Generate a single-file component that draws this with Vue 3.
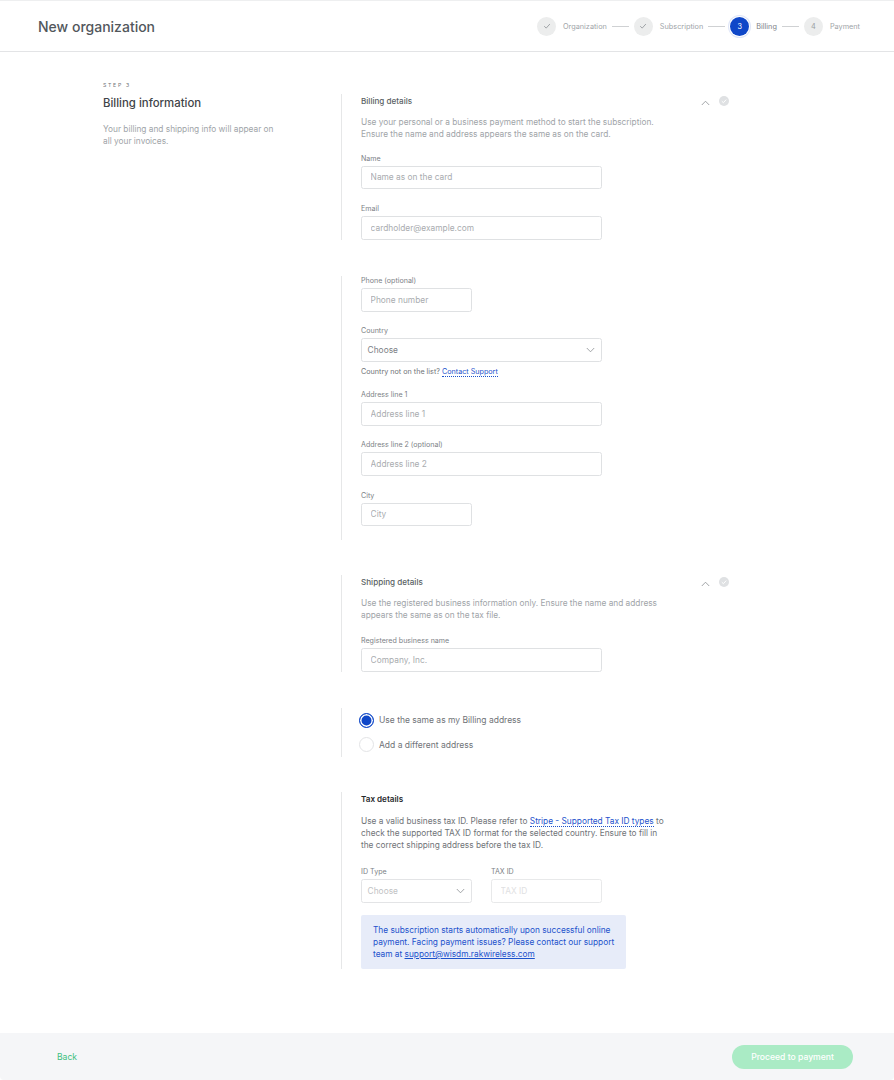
<script setup>
const steps = [
  { label: 'Organization', mark: 'check' },
  { label: 'Subscription', mark: 'check' },
  { label: 'Billing', mark: '3', active: true },
  { label: 'Payment', mark: '4' }
]
</script>

<template>
  <div class="page">
    <header class="top">
      <h1 class="page-title">New organization</h1>
      <ol class="stepper">
        <li v-for="(s, i) in steps" :key="s.label" class="step" :class="{ active: s.active }">
          <span v-if="i > 0" class="line"></span>
          <span class="dot">
            <svg v-if="s.mark === 'check'" width="8" height="8" viewBox="0 0 8 8"><path d="M1.2 4.2 3.2 6.1 6.9 2" fill="none" stroke="#8d9195" stroke-width=".8"/></svg>
            <template v-else>{{ s.mark }}</template>
          </span>
          <span class="step-label">{{ s.label }}</span>
        </li>
      </ol>
    </header>

    <main class="main">
      <aside class="intro">
        <div class="eyebrow">STEP 3</div>
        <h2 class="intro-title">Billing information</h2>
        <p class="intro-text">Your billing and shipping info will appear on all your invoices.</p>
      </aside>

      <div class="content">
        <section class="block s1">
          <div class="head">
            <h3 class="head-title">Billing details</h3>
            <div class="head-icons">
              <svg width="9" height="6" viewBox="0 0 9 6"><path d="M.8 5 4.5 1.2 8.2 5" fill="none" stroke="#8b8f93" stroke-width=".8"/></svg>
              <svg width="10" height="10" viewBox="0 0 10 10"><circle cx="5" cy="5" r="5" fill="#dfe1e3"/><path d="M2.8 5.2 4.4 6.7 7.2 3.6" fill="none" stroke="#fff" stroke-width="1"/></svg>
            </div>
          </div>
          <p class="desc">Use your personal or a business payment method to start the subscription.<br>Ensure the name and address appears the same as on the card.</p>
          <div class="fields top-gap">
            <div class="field"><label class="label">Name</label><input class="input" placeholder="Name as on the card"></div>
            <div class="field"><label class="label">Email</label><input class="input" placeholder="cardholder@example.com"></div>
          </div>
        </section>

        <section class="block s2">
          <div class="fields">
            <div class="field"><label class="label">Phone (optional)</label><input class="input short" placeholder="Phone number"></div>
            <div class="field">
              <label class="label">Country</label>
              <div class="select">
                <span>Choose</span>
                <svg width="9" height="6" viewBox="0 0 9 6"><path d="M.8 1 4.5 4.8 8.2 1" fill="none" stroke="#8b8f93" stroke-width=".8"/></svg>
              </div>
              <p class="help">Country not on the list? <a class="link">Contact Support</a></p>
            </div>
            <div class="field"><label class="label">Address line 1</label><input class="input" placeholder="Address line 1"></div>
            <div class="field"><label class="label">Address line 2 (optional)</label><input class="input" placeholder="Address line 2"></div>
            <div class="field"><label class="label">City</label><input class="input short" placeholder="City"></div>
          </div>
        </section>

        <section class="block s3">
          <div class="head">
            <h3 class="head-title">Shipping details</h3>
            <div class="head-icons">
              <svg width="9" height="6" viewBox="0 0 9 6"><path d="M.8 5 4.5 1.2 8.2 5" fill="none" stroke="#8b8f93" stroke-width=".8"/></svg>
              <svg width="10" height="10" viewBox="0 0 10 10"><circle cx="5" cy="5" r="5" fill="#dfe1e3"/><path d="M2.8 5.2 4.4 6.7 7.2 3.6" fill="none" stroke="#fff" stroke-width="1"/></svg>
            </div>
          </div>
          <p class="desc">Use the registered business information only. Ensure the name and address<br>appears the same as on the tax file.</p>
          <div class="fields top-gap-wide">
            <div class="field"><label class="label">Registered business name</label><input class="input" placeholder="Company, Inc."></div>
          </div>
        </section>

        <section class="block s4">
          <div class="radio-row"><span class="radio on"></span><span>Use the same as my Billing address</span></div>
          <div class="radio-row"><span class="radio"></span><span>Add a different address</span></div>
        </section>

        <section class="block s5">
          <h3 class="head-title dark">Tax details</h3>
          <p class="desc tax-desc">Use a valid business tax ID. Please refer to <a class="link">Stripe - Supported Tax ID types</a> to<br>check the supported TAX ID format for the selected country. Ensure to fill in<br>the correct shipping address before the tax ID.</p>
          <div class="tax-row">
            <div class="field">
              <label class="label">ID Type</label>
              <div class="select short muted">
                <span>Choose</span>
                <svg width="9" height="6" viewBox="0 0 9 6"><path d="M.8 1 4.5 4.8 8.2 1" fill="none" stroke="#8b8f93" stroke-width=".8"/></svg>
              </div>
            </div>
            <div class="field"><label class="label">TAX ID</label><input class="input short ghost" placeholder="TAX ID"></div>
          </div>
          <div class="notice">The subscription starts automatically upon successful online payment. Facing payment issues? Please contact our support team at <a class="notice-link">support@wisdm.rakwireless.com</a></div>
        </section>
      </div>
    </main>

    <footer class="bottom">
      <a class="back">Back</a>
      <button class="proceed" type="button">Proceed to payment</button>
    </footer>
  </div>
</template>

<style scoped>
.page {
  width: 894px;
  height: 1080px;
  display: flex;
  flex-direction: column;
  background: #fff;
  font-family: Inter, "Noto Sans", sans-serif;
  border-top: 1px solid #eeeff0;
  box-sizing: border-box;
  overflow: hidden;
}
.top {
  height: 50px;
  flex: none;
  display: flex;
  align-items: center;
  justify-content: space-between;
  padding: 0 34px 0 38px;
  border-bottom: 1px solid #e3e4e6;
}
.page-title {
  margin: 0;
  font-size: 14px;
  font-weight: 500;
  color: #52575c;
}
.stepper {
  list-style: none;
  margin: 0;
  padding: 0;
  display: flex;
  align-items: center;
}
.step {
  display: flex;
  align-items: center;
  font-size: 7.3px;
  color: #a0a4a8;
}
.line {
  width: 17px;
  height: 1px;
  background: #cfd1d3;
  margin: 0 5px;
}
.dot {
  width: 19px;
  height: 19px;
  border-radius: 50%;
  background: #eceded;
  color: #9a9ea2;
  display: flex;
  align-items: center;
  justify-content: center;
  margin-right: 7px;
}
.active .dot {
  background: #0f47c8;
  color: #fff;
  box-shadow: 0 0 0 1px #fff, 0 0 0 2px #dfe6f8;
}
.active .step-label {
  color: #7c8186;
}
.main {
  flex: 1;
  display: flex;
  padding: 42px 0 0 103px;
}
.intro {
  width: 238px;
  flex: none;
}
.eyebrow {
  font-size: 5.2px;
  letter-spacing: 1.7px;
  line-height: 8px;
  color: #6f7377;
  margin-top: -13px;
}
.intro-title {
  margin: 6px 0 0;
  font-size: 11.4px;
  line-height: 16px;
  font-weight: 500;
  color: #3f4448;
}
.intro-text {
  margin: 12px 0 0;
  width: 175px;
  font-size: 8.3px;
  line-height: 12px;
  color: #a0a4a8;
}
.content {
  width: 388px;
  flex: none;
}
.block {
  border-left: 1px solid #e6e7e8;
  padding-left: 19px;
}
.s1 { height: 146px; box-sizing: border-box; }
.s2 { margin-top: 36px; padding-bottom: 14px; }
.s3 { margin-top: 35px; }
.s4 { margin-top: 36.2px; }
.s5 { margin-top: 35.2px; }
.head {
  display: flex;
  justify-content: space-between;
  align-items: flex-start;
}
.head-title {
  margin: 0;
  font-size: 8.1px;
  line-height: 14px;
  font-weight: 500;
  color: #5a5f64;
}
.head-title.dark {
  font-weight: 600;
  color: #25282b;
}
.head-icons {
  display: flex;
  align-items: center;
  gap: 9px;
  padding-top: 2px;
}
.head-icons svg:first-child {
  margin-top: 4px;
}
.desc {
  margin: 8px 0 0;
  font-size: 8.3px;
  line-height: 12px;
  color: #a0a4a8;
}
.tax-desc {
  margin-top: 8.6px;
  color: #6f7377;
  line-height: 12.2px;
}
.fields {
  display: flex;
  flex-direction: column;
  gap: 14.6px;
}
.top-gap {
  margin-top: 13.5px;
}
.top-gap-wide {
  margin-top: 14.6px;
}
.field {
  display: flex;
  flex-direction: column;
}
.label {
  display: block;
  font-size: 7.1px;
  line-height: 9px;
  margin-bottom: 3px;
  color: #7c8186;
}
.input,
.select {
  box-sizing: border-box;
  width: 241px;
  height: 23.8px;
  border: 1px solid #dfe1e3;
  border-radius: 2.5px;
  background: #fff;
  font-family: inherit;
  font-size: 8.35px;
  outline: none;
}
.input {
  padding: 0 8.6px;
  color: #52575c;
}
.input::placeholder {
  color: #a9acaf;
  opacity: 1;
}
.short {
  width: 111px;
}
.ghost::placeholder {
  color: #dfe1e2;
}
.ghost {
  border-color: #e8e9ea;
}
.select {
  display: flex;
  align-items: center;
  justify-content: space-between;
  padding: 0 6px 0 5.6px;
  color: #7c8186;
}
.select.muted {
  color: #bfc2c4;
  border-color: #e3e4e6;
}
.help {
  margin: 4px 0 -3px;
  font-size: 7.2px;
  line-height: 12px;
  color: #6f7377;
}
.link {
  color: #1c52cc;
  border-bottom: 1px dotted #1c52cc;
}
.radio-row {
  display: flex;
  align-items: center;
  gap: 5px;
  height: 24.5px;
  margin-left: -2px;
  font-size: 8.5px;
  color: #6f7377;
}
.radio {
  box-sizing: border-box;
  width: 15px;
  height: 15px;
  border-radius: 50%;
  border: 1px solid #e3e4e6;
  background: #fff;
}
.radio.on {
  border: 1px solid #0f47c8;
  background: #0f47c8;
  box-shadow: inset 0 0 0 1.5px #fff;
}
.tax-row {
  display: flex;
  gap: 19px;
  margin-top: 15.8px;
}
.notice {
  box-sizing: border-box;
  width: 265px;
  height: 54px;
  margin-top: 12px;
  padding: 9px 9px 9px 12px;
  border-radius: 2px;
  background: #e7ecf9;
  color: #1c52cc;
  font-size: 8.3px;
  line-height: 12px;
}
.notice-link {
  text-decoration: underline;
}
.bottom {
  height: 47px;
  flex: none;
  display: flex;
  align-items: center;
  justify-content: space-between;
  padding: 0 41px 0 57px;
  background: #f5f6f8;
  border-radius: 0 0 4px 4px;
}
.back {
  font-size: 8.6px;
  color: #3fbf7f;
}
.proceed {
  width: 121px;
  height: 24px;
  border: 0;
  border-radius: 12px;
  background: #aaebc5;
  color: #fff;
  font-family: inherit;
  font-size: 8.6px;
  font-weight: 500;
}
</style>
